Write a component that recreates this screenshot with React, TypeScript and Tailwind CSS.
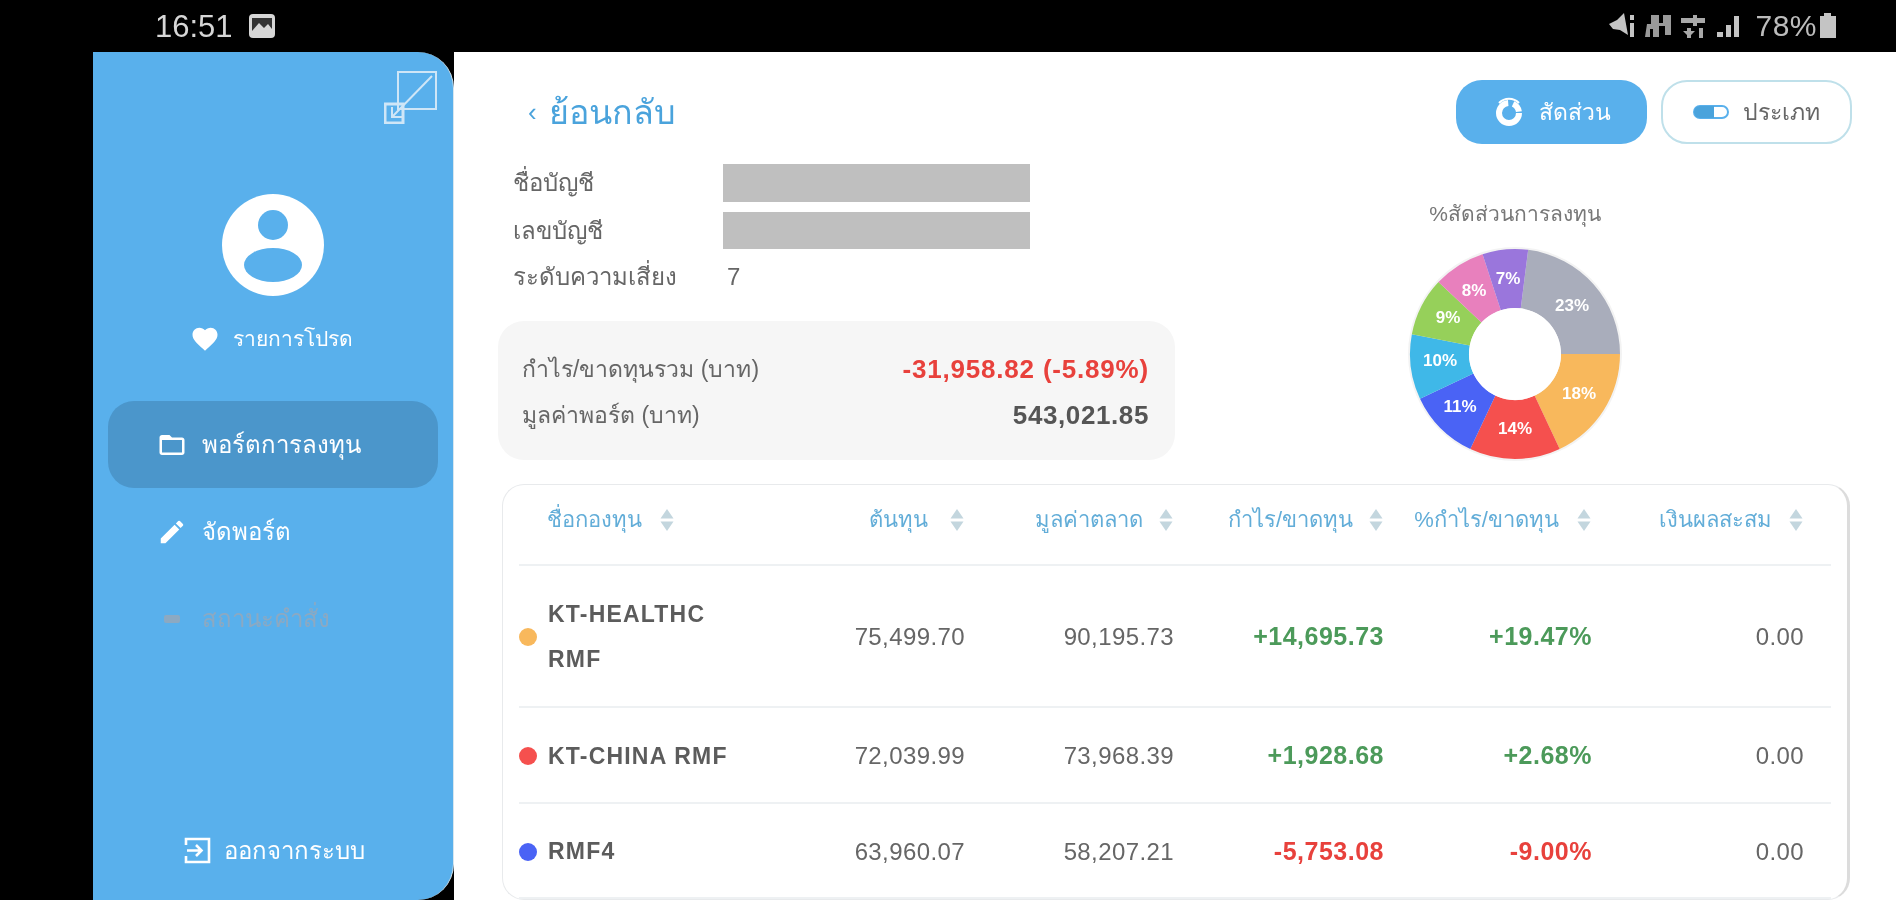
import React from "react";
import { MdEdit, MdFavorite, MdFolderOpen } from "react-icons/md";

const SortIcon: React.FC = () => (
  <svg width="16" height="24" viewBox="0 0 16 24" className="shrink-0">
    <path d="M8 1 L14.5 10.5 H1.5 Z" fill="#c3d6de" />
    <path d="M8 23 L14.5 13.5 H1.5 Z" fill="#c3d6de" />
  </svg>
);

const ExpandIcon: React.FC = () => (
  <svg width="53" height="53" viewBox="0 0 53 53" fill="none" stroke="#cfe6f7" strokeWidth="2">
    <rect x="14" y="1" width="38" height="37" />
    <rect x="1" y="33" width="18" height="19" strokeWidth="3" />
    <path d="M48 5 L8 46" />
    <path d="M8 36 V46 H18" />
  </svg>
);

const Avatar: React.FC = () => (
  <svg width="102" height="102" viewBox="0 0 102 102">
    <circle cx="51" cy="51" r="51" fill="#ffffff" />
    <circle cx="51" cy="31" r="15" fill="#59b0ec" />
    <ellipse cx="51" cy="71" rx="29" ry="17" fill="#59b0ec" />
  </svg>
);

const LogoutIcon: React.FC = () => (
  <svg width="27" height="27" viewBox="0 0 27 27" fill="none" stroke="#ffffff" strokeWidth="2.6">
    <path d="M2 8 V2 H25 V25 H2 V19" />
    <path d="M3 13.5 H17 M12 8 L17.5 13.5 L12 19" />
  </svg>
);

const DonutIcon: React.FC = () => (
  <svg width="32" height="32" viewBox="0 0 32 32" fill="none" stroke="#ffffff">
    <circle cx="16" cy="17" r="10" strokeWidth="6" strokeDasharray="46 5 10 2" />
    <path d="M6 7 A14 14 0 0 1 26 7" strokeWidth="2" />
  </svg>
);

const PillIcon: React.FC = () => (
  <svg width="36" height="14" viewBox="0 0 36 14">
    <rect x="1" y="1" width="34" height="12" rx="6" fill="#ffffff" stroke="#59b0ec" strokeWidth="2" />
    <path d="M7 1 H21 V13 H7 A6 6 0 0 1 7 1 Z" fill="#4aa3dc" />
  </svg>
);

const StatusLeft: React.FC = () => (
  <div className="flex items-center gap-[15px] ml-[155px]">
    <span className="text-[31px] leading-none text-[#d6d6d6]">16:51</span>
    <svg width="28" height="28" viewBox="0 0 28 28">
      <rect x="1" y="2" width="26" height="24" rx="4" fill="#d6d6d6" />
      <path d="M4 19 L11 11 L16 16 L20 12 L24 17 V6 H4 Z" fill="#333" />
    </svg>
  </div>
);

const StatusRight: React.FC = () => (
  <div className="flex items-center ml-auto mr-[58px] text-[#bcbcbc]">
    <svg width="146" height="30" viewBox="0 0 146 30" fill="#c4c4c4">
      <path d="M0 13 L8 9 L15 2 L19 24 L11 19 L4 18 Z" />
      <rect x="21" y="4" width="4" height="5" />
      <rect x="21" y="12" width="4" height="14" />
      <path d="M36 26 L38 13 H42 V4 H50 V12 H54 V4 H62 V24 H56 V15 H50 V26 H44 V18 H41 V26 Z" fill="#9a9a9a" />
      <path d="M72 7 H84 V4 H88 V7 H96 V12 H88 V15 H84 V12 H72 Z" fill="#a8a8a8" />
      <path d="M78 17 H82 V27 H78 Z M74 20 H86 L80 26 Z M90 17 H94 V27 H90 Z" fill="#a8a8a8" />
      <path d="M108 21 H114 V26 H108 Z M117 14 H122 V26 H117 Z M125 5 H130 V26 H125 Z" />
    </svg>
    <span className="text-[30px] leading-none tracking-[0.5px]">78%</span>
    <svg width="20" height="30" viewBox="0 0 20 30" className="ml-[1px]">
      <path d="M6 2 H13 V5 H18 V27 H2 V5 H6 Z" fill="#c4c4c4" />
    </svg>
  </div>
);

const Sidebar: React.FC = () => (
  <aside className="w-[361px] shrink-0 bg-[#59b0ec] rounded-r-[36px] flex flex-col border-r border-[#d6e6ef]">
    <div className="flex justify-end pt-[19px] pr-[16px]">
      <ExpandIcon />
    </div>
    <div className="flex justify-center mt-[70px] ml-[-1px]">
      <Avatar />
    </div>
    <div className="flex items-center justify-center gap-[13px] mt-[28px] text-white text-[21px] leading-[30px] ml-[-4px]">
      <MdFavorite size={30} />
      <span>รายการโปรด</span>
    </div>
    <nav className="flex flex-col mx-[15px] mt-[47px]">
      <div className="h-[87px] rounded-[26px] bg-[#4b96cb] flex items-center gap-[15px] pl-[49px] text-white text-[24px]">
        <MdFolderOpen size={30} />
        <span>พอร์ตการลงทุน</span>
      </div>
      <div className="h-[87px] flex items-center gap-[15px] pl-[49px] text-white text-[24px]">
        <MdEdit size={30} />
        <span>จัดพอร์ต</span>
      </div>
      <div className="h-[87px] flex items-center gap-[15px] pl-[49px] text-[#8ca9c2] text-[24px]">
        <svg width="30" height="30" viewBox="0 0 30 30" fill="#8ca9c2">
          <rect x="7" y="11" width="16" height="8" rx="2" />
        </svg>
        <span>สถานะคำสั่ง</span>
      </div>
    </nav>
    <div className="mt-auto mb-[36px] flex items-center justify-center gap-[13px] text-white text-[24px] leading-[27px] pl-[3px]">
      <LogoutIcon />
      <span>ออกจากระบบ</span>
    </div>
  </aside>
);

const slices = [
  { color: "#a9adbb", from: 7.2, to: 90, label: "23%", x: 57, y: -49 },
  { color: "#f8b85c", from: 90, to: 154.8, label: "18%", x: 64, y: 39 },
  { color: "#f5504e", from: 154.8, to: 205.2, label: "14%", x: 0, y: 74 },
  { color: "#4a63f5", from: 205.2, to: 244.8, label: "11%", x: -55, y: 52 },
  { color: "#3fb8e8", from: 244.8, to: 280.8, label: "10%", x: -75, y: 6 },
  { color: "#96d05a", from: 280.8, to: 313.2, label: "9%", x: -67, y: -37 },
  { color: "#e880bd", from: 313.2, to: 342, label: "8%", x: -41, y: -64 },
  { color: "#9a76dc", from: 342, to: 367.2, label: "7%", x: -7, y: -76 },
];

const slicePath = (from: number, to: number, r: number, inner: number) => {
  const pt = (a: number, rad: number) => {
    const t = ((a - 90) * Math.PI) / 180;
    return `${(rad * Math.cos(t)).toFixed(2)} ${(rad * Math.sin(t)).toFixed(2)}`;
  };
  const large = to - from > 180 ? 1 : 0;
  return `M${pt(from, r)} A${r} ${r} 0 ${large} 1 ${pt(to, r)} L${pt(to, inner)} A${inner} ${inner} 0 ${large} 0 ${pt(from, inner)} Z`;
};

const PieChart: React.FC = () => (
  <svg width="216" height="216" viewBox="-108 -108 216 216">
    <circle r="107" fill="#f3f3f3" />
    {slices.map((s) => (
      <path key={s.label + s.from} d={slicePath(s.from, s.to, 105, 46)} fill={s.color} />
    ))}
    <circle r="46" fill="#ffffff" />
    {slices.map((s) => (
      <text
        key={s.label + s.to}
        x={s.x}
        y={s.y}
        textAnchor="middle"
        dominantBaseline="central"
        fill="#ffffff"
        fontSize="17"
        fontWeight="700"
      >
        {s.label}
      </text>
    ))}
  </svg>
);

const columns = [
  { label: "ต้นทุน", gap: "gap-[21px]" },
  { label: "มูลค่าตลาด", gap: "gap-[15px]" },
  { label: "กำไร/ขาดทุน", gap: "gap-[15px]" },
  { label: "%กำไร/ขาดทุน", gap: "gap-[17px]" },
  { label: "เงินผลสะสม", gap: "gap-[16px]" },
];

const rows = [
  { dot: "bg-[#f8b85c]", name: "KT-HEALTHC RMF", cost: "75,499.70", value: "90,195.73", pl: "+14,695.73", pct: "+19.47%", up: true, h: "h-[142px]" },
  { dot: "bg-[#f5504e]", name: "KT-CHINA RMF", cost: "72,039.99", value: "73,968.39", pl: "+1,928.68", pct: "+2.68%", up: true, h: "h-[96px]" },
  { dot: "bg-[#4a63f5]", name: "RMF4", cost: "63,960.07", value: "58,207.21", pl: "-5,753.08", pct: "-9.00%", up: false, h: "h-[95px]" },
];

const gridCols = "grid grid-cols-[241px_205px_209px_210px_208px_212px]";

const FundTable: React.FC = () => (
  <div className="ml-[48px] mt-[22px] w-[1348px] rounded-[22px] border border-[#e8eaec] border-r-[3px] border-r-[#dcdcdc] px-[16px]">
    <div className={`${gridCols} h-[81px] pb-[10px] items-center border-b-2 border-[#eef1f3] text-[#62add8] text-[22px]`}>
      <div className="flex items-center gap-[17px] pl-[28px]">
        <span>ชื่อกองทุน</span>
        <SortIcon />
      </div>
      {columns.map((c) => (
        <div key={c.label} className={`flex items-center justify-end ${c.gap}`}>
          <span className="whitespace-nowrap">{c.label}</span>
          <SortIcon />
        </div>
      ))}
    </div>
    {rows.map((r) => (
      <div key={r.name} className={`${gridCols} ${r.h} pt-[2px] items-center border-b-2 border-[#eef1f3] text-[24px] text-[#666666]`}>
        <div className="flex items-center gap-[11px]">
          <span className={`w-[18px] h-[18px] rounded-full shrink-0 ${r.dot}`} />
          <span className="w-[200px] text-[23px] font-bold text-[#5c5c5c] leading-[45px] tracking-[1.2px]">{r.name}</span>
        </div>
        <div className="text-right tracking-[0.4px]">{r.cost}</div>
        <div className="text-right tracking-[0.4px]">{r.value}</div>
        <div className={`text-right text-[25px] font-bold tracking-[0.5px] ${r.up ? "text-[#4c9a5a]" : "text-[#e8413c]"}`}>{r.pl}</div>
        <div className={`text-right text-[25px] font-bold tracking-[0.5px] ${r.up ? "text-[#4c9a5a]" : "text-[#e8413c]"}`}>{r.pct}</div>
        <div className="text-right tracking-[0.4px]">0.00</div>
      </div>
    ))}
  </div>
);

const Main: React.FC = () => (
  <main className="flex-1 bg-white flex flex-col min-w-0">
    <div className="flex items-center pl-[74px] pr-[44px] pt-[28px]">
      <div className="flex items-center gap-[12px] text-[#4aa3dc] text-[34px] leading-none">
        <span className="text-[26px]">‹</span>
        <span>ย้อนกลับ</span>
      </div>
      <div className="ml-auto flex gap-[14px]">
        <div className="w-[191px] h-[64px] rounded-[26px] bg-[#59b0ec] text-white text-[23px] flex items-center justify-center gap-[14px]">
          <DonutIcon />
          <span>สัดส่วน</span>
        </div>
        <div className="w-[191px] h-[64px] rounded-[26px] border-2 border-[#bfe0ea] text-[#666666] text-[23px] flex items-center justify-center gap-[14px]">
          <PillIcon />
          <span>ประเภท</span>
        </div>
      </div>
    </div>

    <div className="flex mt-[20px] ml-[44px]">
      <div className="w-[677px]">
        <div className="pl-[15px] grid grid-cols-[210px_307px] gap-y-[10px] text-[24px] text-[#666666] items-center">
          <span>ชื่อบัญชี</span>
          <div className="h-[38px] bg-[#bfbfbf]" />
          <span>เลขบัญชี</span>
          <div className="h-[37px] bg-[#bfbfbf]" />
          <span>ระดับความเสี่ยง</span>
          <span className="pl-[4px]">7</span>
        </div>
        <div className="mt-[26px] h-[139px] pt-[4px] rounded-[26px] bg-[#f6f6f6] flex flex-col justify-center gap-[12px] pl-[24px] pr-[26px] text-[23px] text-[#666666]">
          <div className="flex justify-between items-center h-[34px]">
            <span>กำไร/ขาดทุนรวม (บาท)</span>
            <span className="font-bold text-[26px] text-[#e8413c] tracking-[0.8px]">-31,958.82 (-5.89%)</span>
          </div>
          <div className="flex justify-between items-center h-[34px]">
            <span>มูลค่าพอร์ต (บาท)</span>
            <span className="font-bold text-[26px] text-[#555555] tracking-[0.6px]">543,021.85</span>
          </div>
        </div>
      </div>
      <div className="ml-[232px] w-[216px] flex flex-col items-center pt-[36px]">
        <span className="text-[21px] leading-[28px] text-[#777777] whitespace-nowrap">%สัดส่วนการลงทุน</span>
        <div className="mt-[18px]">
          <PieChart />
        </div>
      </div>
    </div>

    <FundTable />
  </main>
);

export default function App() {
  return (
    <div className="w-[1896px] h-[900px] overflow-hidden bg-black flex flex-col blur-[0.7px] [font-family:'Liberation_Sans','Noto_Sans',sans-serif]">
      <header className="h-[52px] shrink-0 flex items-center">
        <StatusLeft />
        <StatusRight />
      </header>
      <div className="flex-1 flex pl-[93px] min-h-0">
        <Sidebar />
        <Main />
      </div>
    </div>
  );
}
